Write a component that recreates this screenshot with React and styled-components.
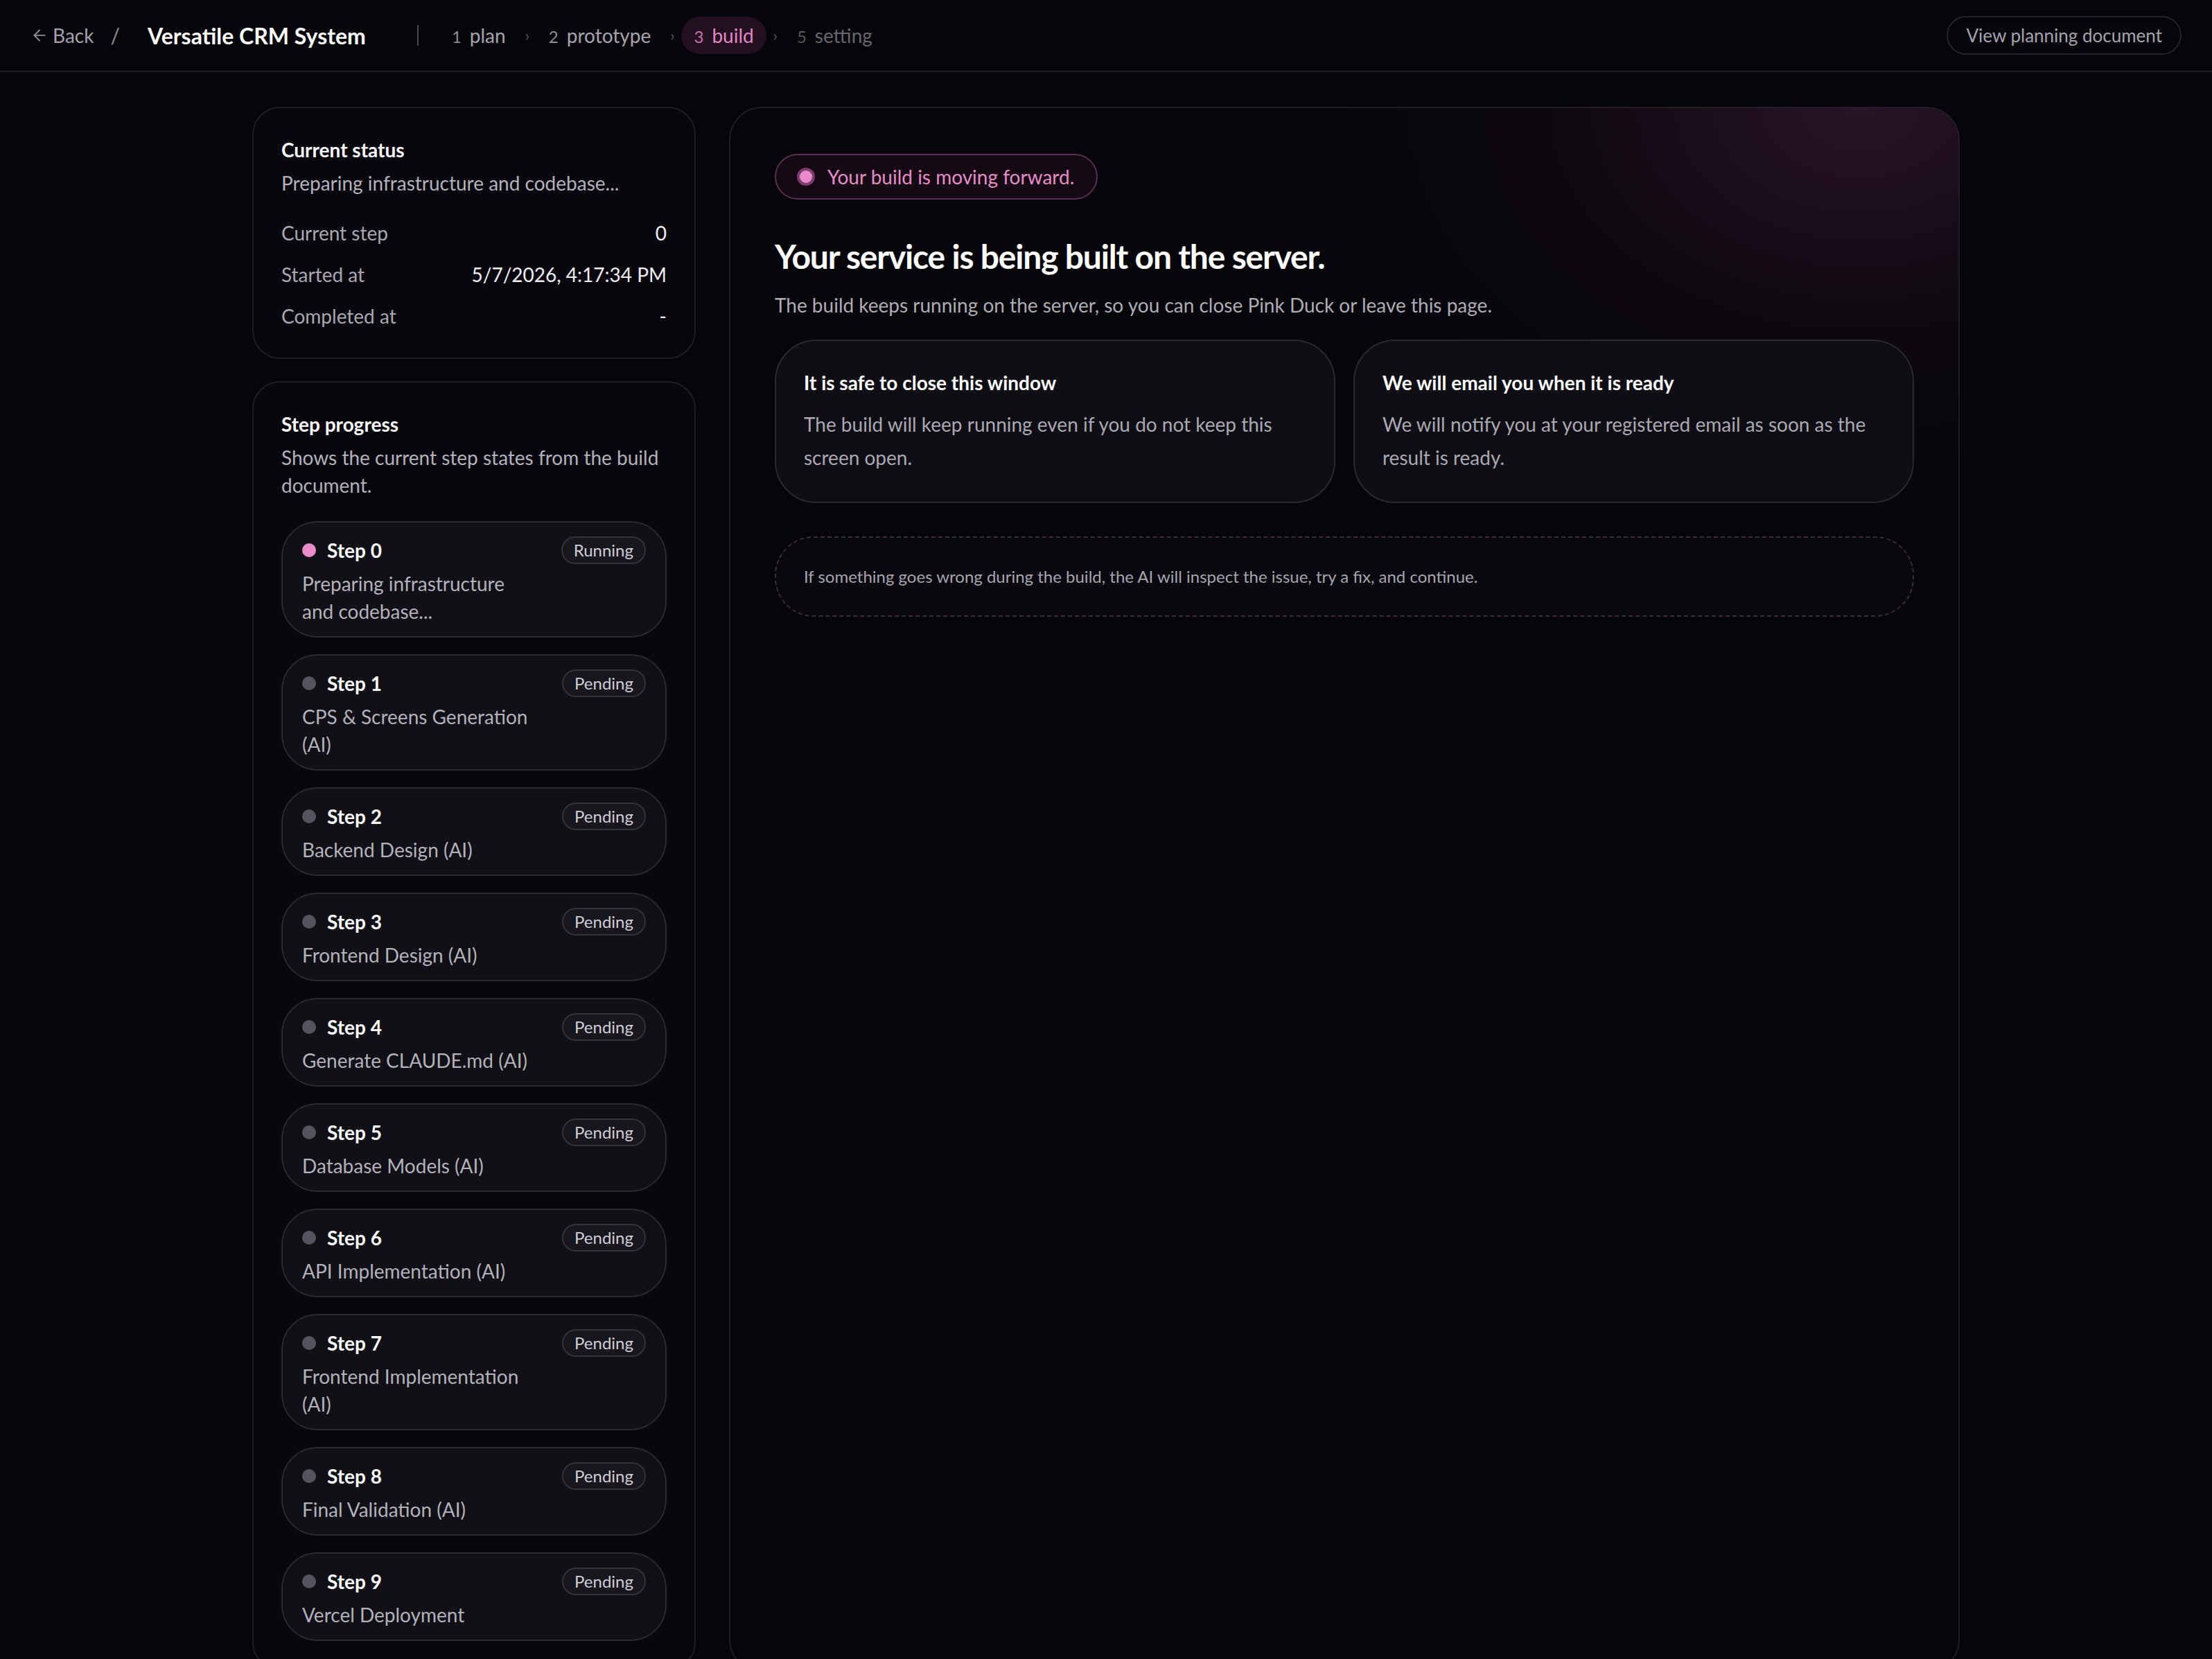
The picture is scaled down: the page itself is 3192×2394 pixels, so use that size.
import React from 'react'
import styled, { createGlobalStyle } from 'styled-components'
import { ArrowLeft } from 'lucide-react'

const GlobalStyle = createGlobalStyle`
  html {
    zoom: 2;
  }
  body {
    margin: 0;
    background: #06050a;
    color: #f3f2f6;
    font-family: Lato, "Open Sans", "Noto Sans", sans-serif;
    -webkit-font-smoothing: antialiased;
  }
  * {
    box-sizing: border-box;
  }
`

const navSteps = [
  { num: 1, label: 'plan', state: 'done' },
  { num: 2, label: 'prototype', state: 'done' },
  { num: 3, label: 'build', state: 'active' },
  { num: 5, label: 'setting', state: 'todo' },
]

const buildSteps = [
  { num: 0, label: 'Preparing infrastructure and codebase...', status: 'Running' },
  { num: 1, label: 'CPS & Screens Generation (AI)', status: 'Pending' },
  { num: 2, label: 'Backend Design (AI)', status: 'Pending' },
  { num: 3, label: 'Frontend Design (AI)', status: 'Pending' },
  { num: 4, label: 'Generate CLAUDE.md (AI)', status: 'Pending' },
  { num: 5, label: 'Database Models (AI)', status: 'Pending' },
  { num: 6, label: 'API Implementation (AI)', status: 'Pending' },
  { num: 7, label: 'Frontend Implementation (AI)', status: 'Pending' },
  { num: 8, label: 'Final Validation (AI)', status: 'Pending' },
  { num: 9, label: 'Vercel Deployment', status: 'Pending' },
]

export default function App() {
  return (
    <>
      <GlobalStyle />
      <Header>
        <HeaderLeft>
          <BackLink>
            <ArrowLeft size={13} strokeWidth={1.6} />
            Back
          </BackLink>
          <Slash>/</Slash>
          <ProjectTitle>Versatile CRM System</ProjectTitle>
          <Divider />
          <StepNav>
            {navSteps.map((s, i) => (
              <React.Fragment key={s.num}>
                {i > 0 && <Chevron>›</Chevron>}
                <NavItem state={s.state}>
                  <NavNum>{s.num}</NavNum>
                  {s.label}
                </NavItem>
              </React.Fragment>
            ))}
          </StepNav>
        </HeaderLeft>
        <OutlineButton>View planning document</OutlineButton>
      </Header>

      <Main>
        <Sidebar>
          <Panel>
            <PanelTitle>Current status</PanelTitle>
            <PanelText>Preparing infrastructure and codebase...</PanelText>
            <InfoList>
              <InfoRow>
                <span>Current step</span>
                <InfoValue>0</InfoValue>
              </InfoRow>
              <InfoRow>
                <span>Started at</span>
                <InfoValue>5/7/2026, 4:17:34 PM</InfoValue>
              </InfoRow>
              <InfoRow>
                <span>Completed at</span>
                <InfoValue>-</InfoValue>
              </InfoRow>
            </InfoList>
          </Panel>

          <Panel>
            <PanelTitle>Step progress</PanelTitle>
            <PanelText>Shows the current step states from the build document.</PanelText>
            <StepList>
              {buildSteps.map((s) => (
                <StepCard key={s.num}>
                  <StepBody>
                    <StepHead>
                      <Dot running={s.status === 'Running'} />
                      <StepName>Step {s.num}</StepName>
                    </StepHead>
                    <StepLabel>{s.label}</StepLabel>
                  </StepBody>
                  <StatusBadge>{s.status}</StatusBadge>
                </StepCard>
              ))}
            </StepList>
          </Panel>
        </Sidebar>

        <Stage>
          <LiveBadge>
            <LiveDot />
            Your build is moving forward.
          </LiveBadge>
          <Headline>Your service is being built on the server.</Headline>
          <Lead>The build keeps running on the server, so you can close Pink Duck or leave this page.</Lead>
          <NoticeGrid>
            <Notice>
              <NoticeTitle>It is safe to close this window</NoticeTitle>
              <NoticeText>The build will keep running even if you do not keep this screen open.</NoticeText>
            </Notice>
            <Notice>
              <NoticeTitle>We will email you when it is ready</NoticeTitle>
              <NoticeText>We will notify you at your registered email as soon as the result is ready.</NoticeText>
            </Notice>
          </NoticeGrid>
          <Hint>If something goes wrong during the build, the AI will inspect the issue, try a fix, and continue.</Hint>
        </Stage>
      </Main>
    </>
  )
}

const Header = styled.header`
  height: 52px;
  display: flex;
  align-items: center;
  justify-content: space-between;
  padding: 0 22px;
  border-bottom: 1px solid #1f1e26;
`
const HeaderLeft = styled.div`
  display: flex;
  align-items: center;
`
const BackLink = styled.a`
  display: flex;
  align-items: center;
  gap: 3px;
  font-size: 14px;
  color: #a3a2ab;
  cursor: pointer;
`
const Slash = styled.span`
  margin: 0 20px 0 12px;
  font-size: 15px;
  color: #8d8c95;
`
const ProjectTitle = styled.h1`
  margin: 0;
  font-size: 16px;
  font-weight: 700;
  color: #ffffff;
`
const Divider = styled.span`
  width: 1px;
  height: 15px;
  background: #4a4952;
  margin: 0 15px 0 37px;
`
const StepNav = styled.nav`
  display: flex;
  align-items: center;
`
const NavItem = styled.span`
  display: flex;
  align-items: baseline;
  gap: 6px;
  height: 27px;
  line-height: 27px;
  padding: 0 9px;
  border-radius: 999px;
  font-size: 14px;
  color: ${(p) => (p.state === 'active' ? '#e585c4' : p.state === 'todo' ? '#66656e' : '#a6a5ae')};
  background: ${(p) => (p.state === 'active' ? '#221020' : 'transparent')};
`
const NavNum = styled.span`
  font-size: 12px;
  opacity: 0.85;
`
const Chevron = styled.span`
  font-size: 11px;
  color: #57565f;
  margin: 0 5px 1px;
`
const OutlineButton = styled.button`
  height: 28px;
  padding: 0 13px;
  border: 1px solid #24232b;
  border-radius: 999px;
  background: transparent;
  color: #a5a4ad;
  font-family: inherit;
  font-size: 13px;
`

const Main = styled.main`
  width: 1232px;
  margin: 0 auto;
  padding: 25px 0 40px;
  display: grid;
  grid-template-columns: 320px 1fr;
  gap: 24px;
  align-items: stretch;
`
const Sidebar = styled.aside`
  display: flex;
  flex-direction: column;
  gap: 16px;
`
const Panel = styled.section`
  padding: 20px;
  border: 1px solid #1e1d25;
  border-radius: 20px;
  background: #08070d;
`
const PanelTitle = styled.h2`
  margin: 0;
  font-size: 14px;
  line-height: 20px;
  font-weight: 700;
  color: #ffffff;
`
const PanelText = styled.p`
  margin: 4px 0 0;
  font-size: 14px;
  line-height: 20px;
  color: #b3b2bb;
`
const InfoList = styled.div`
  margin-top: 16px;
  display: flex;
  flex-direction: column;
  gap: 10px;
`
const InfoRow = styled.div`
  display: flex;
  justify-content: space-between;
  font-size: 14px;
  line-height: 20px;
  color: #a9a8b1;
`
const InfoValue = styled.span`
  color: #f1f0f4;
`
const StepList = styled.div`
  margin-top: 16px;
  display: flex;
  flex-direction: column;
  gap: 12px;
`
const StepCard = styled.div`
  display: flex;
  align-items: flex-start;
  justify-content: space-between;
  gap: 24px;
  padding: 10px 14px 8px 14px;
  border: 1px solid #2a2932;
  border-radius: 26px;
  background: #111017;
`
const StepBody = styled.div`
  flex: 1;
  min-width: 0;
`
const StepHead = styled.div`
  display: flex;
  align-items: center;
  gap: 8px;
  height: 20px;
`
const Dot = styled.span`
  width: 10px;
  height: 10px;
  border-radius: 50%;
  background: ${(p) => (p.running ? '#ea8ccb' : '#55545d')};
`
const StepName = styled.span`
  font-size: 14px;
  font-weight: 700;
  color: #ffffff;
`
const StepLabel = styled.p`
  margin: 4px 0 0;
  font-size: 14px;
  line-height: 20px;
  color: #b3b2bb;
`
const StatusBadge = styled.span`
  flex-shrink: 0;
  height: 20px;
  line-height: 18px;
  padding: 0 8px;
  border: 1px solid #34333c;
  border-radius: 999px;
  background: #18171e;
  font-size: 12px;
  color: #cfced6;
`

const Stage = styled.section`
  min-height: 1130px;
  padding: 32px;
  border: 1px solid #1e1d25;
  border-radius: 24px;
  background:
    radial-gradient(ellipse 420px 300px at 92% 0%, rgba(70, 32, 62, 0.55), rgba(40, 18, 36, 0.2) 55%, transparent 100%),
    #06050a;
`
const LiveBadge = styled.div`
  display: inline-flex;
  align-items: center;
  gap: 9px;
  height: 33px;
  margin-top: 1px;
  padding: 0 16px 0 15px;
  border: 1px solid #5a2f52;
  border-radius: 999px;
  background: #150a14;
  font-size: 14px;
  color: #e98bc8;
`
const LiveDot = styled.span`
  width: 13px;
  height: 13px;
  border-radius: 50%;
  background: #ea8ccb;
  border: 2px solid #7b3d6b;
`
const Headline = styled.h2`
  margin: 25px 0 0;
  font-size: 24px;
  line-height: 32px;
  font-weight: 700;
  letter-spacing: -0.6px;
  color: #ffffff;
`
const Lead = styled.p`
  margin: 9px 0 0;
  font-size: 14px;
  line-height: 20px;
  color: #aeadb6;
`
const NoticeGrid = styled.div`
  margin-top: 15px;
  display: grid;
  grid-template-columns: 1fr 1fr;
  gap: 13px;
`
const Notice = styled.div`
  padding: 20px;
  border: 1px solid #2a2932;
  border-radius: 30px;
  background: #0f0e15;
`
const NoticeTitle = styled.h3`
  margin: 0;
  font-size: 14px;
  line-height: 20px;
  font-weight: 700;
  color: #ffffff;
`
const NoticeText = styled.p`
  margin: 8px 0 0;
  font-size: 14px;
  line-height: 24px;
  color: #aaa9b2;
`
const Hint = styled.p`
  margin: 24px 0 0;
  padding: 19px 20px;
  border: 1px dashed #3d2a3a;
  border-radius: 28px;
  background: #09080e;
  font-size: 12px;
  line-height: 18px;
  color: #a6a5ae;
`
